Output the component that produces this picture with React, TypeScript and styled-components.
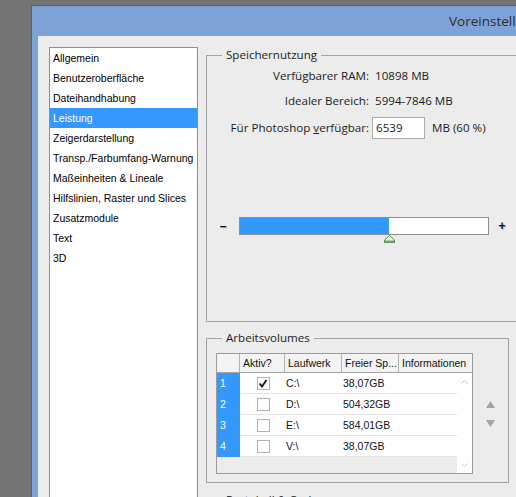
import React from 'react';
import styled, { createGlobalStyle } from 'styled-components';

const GlobalStyle = createGlobalStyle`
  html, body {
    margin: 0;
    padding: 0;
  }
  body {
    width: 516px;
    height: 497px;
    overflow: hidden;
    background: #747474;
  }
`;

const uiFont = `'Open Sans', 'Liberation Sans', Arial, sans-serif`;
const listFont = `'Liberation Sans', Arial, sans-serif`;

const Desktop = styled.div`
  width: 516px;
  height: 497px;
  overflow: hidden;
  box-sizing: border-box;
  padding: 5px 0 0 31px;
  background: #747474;
`;

const Window = styled.div`
  width: 560px;
  height: 600px;
  background: #7da2d6;
  border-top: 1px solid #5e5e5e;
  border-left: 1px solid #5e5e5e;
  padding-left: 6px;
  display: flex;
  flex-direction: column;
`;

const TitleBar = styled.div`
  height: 30px;
  flex-shrink: 0;
  display: flex;
  align-items: center;
  padding-left: 411px;
  font: 13.5px/30px ${uiFont};
  color: #2c2c2c;
  white-space: nowrap;
`;

const Client = styled.div`
  flex: 1;
  background: #ececec;
  display: flex;
  align-items: flex-start;
  gap: 8px;
  padding: 11px 0 0 11px;
`;

const CategoryList = styled.ul`
  list-style: none;
  margin: 0;
  padding: 0;
  width: 149px;
  height: 480px;
  flex-shrink: 0;
  box-sizing: border-box;
  background: #fff;
  border: 1px solid #8f8f8f;
  font: 10.5px ${listFont};
`;

const CategoryItem = styled.li<{ $active?: boolean }>`
  height: 20px;
  line-height: 20px;
  padding-left: 3px;
  white-space: nowrap;
  background: ${({ $active }) => ($active ? '#3399ff' : 'transparent')};
  color: ${({ $active }) => ($active ? '#fff' : '#000')};
`;

const Panel = styled.div`
  display: flex;
  flex-direction: column;
  align-items: flex-start;
  width: 340px;
  flex-shrink: 0;
`;

const Group = styled.fieldset<{ $width: number; $height: number; $gap?: number }>`
  margin: ${({ $gap }) => $gap ?? 0}px 0 0;
  padding: 0;
  min-inline-size: 0;
  box-sizing: border-box;
  width: ${({ $width }) => $width}px;
  height: ${({ $height }) => $height}px;
  border: 1px solid #a2a2a2;
`;

const GroupTitle = styled.legend`
  margin-left: 15px;
  padding: 0 4px;
  font: 11.6px/16px ${uiFont};
  color: #1c1c1c;
`;

const MemoryGrid = styled.div`
  display: grid;
  grid-template-columns: 162px auto;
  grid-template-rows: 25px 25px 30px;
  column-gap: 3px;
  align-items: center;
  font: 11.6px/16px ${uiFont};
  color: #1c1c1c;
`;

const Label = styled.span`
  text-align: right;
  white-space: nowrap;
`;

const Value = styled.span`
  padding-left: 3px;
  white-space: nowrap;
`;

const InputRow = styled.div`
  display: flex;
  align-items: center;
  gap: 7px;
  white-space: nowrap;
`;

const NumberBox = styled.div`
  width: 53px;
  height: 22px;
  box-sizing: border-box;
  border: 1px solid #ababab;
  background: #fff;
  padding-left: 3px;
  line-height: 20px;
`;

const SliderRow = styled.div`
  display: flex;
  align-items: center;
  margin-top: 74px;
`;

const SliderSign = styled.span<{ $width: number }>`
  width: ${({ $width }) => $width}px;
  text-align: center;
  font: bold 12px/18px ${listFont};
  color: #111;
  text-shadow: 1px 1px 1px rgba(0, 0, 0, 0.25);
`;

const Track = styled.div`
  position: relative;
  width: 250px;
  height: 18px;
  box-sizing: border-box;
  border: 1px solid #8e8e8e;
  background: #fff;
`;

const TrackFill = styled.div`
  height: 100%;
  background: #3399ff;
`;

const Thumb = styled.svg`
  position: absolute;
  top: calc(100% + 1px);
  margin-left: -5px;
`;

const VolumesBody = styled.div`
  display: flex;
  align-items: center;
  margin-top: 7px;
  padding-left: 9px;
`;

const Table = styled.div`
  width: 257px;
  height: 121px;
  flex-shrink: 0;
  box-sizing: border-box;
  border: 1px solid #9c9c9c;
  background: #ececec;
  display: flex;
  flex-direction: column;
  font: 10.5px ${listFont};
  color: #111;
`;

const columns = '23px 45px 57px 57px 1fr';

const HeaderRow = styled.div`
  display: grid;
  grid-template-columns: ${columns};
  height: 19px;
  flex-shrink: 0;
  box-sizing: border-box;
  border-bottom: 1px solid #a4a4a4;
  background: #f3f3f3;
`;

const HeaderCell = styled.div<{ $last?: boolean }>`
  padding-left: 3px;
  line-height: 18px;
  white-space: nowrap;
  overflow: hidden;
  border-right: ${({ $last }) => ($last ? 'none' : '1px solid #b4b4b4')};
`;

const TableBody = styled.div`
  flex: 1;
  display: flex;
`;

const Rows = styled.div`
  flex: 1;
  display: flex;
  flex-direction: column;
`;

const Row = styled.div`
  display: grid;
  grid-template-columns: ${columns};
  height: 21px;
`;

const NumberCell = styled.div`
  background: #3399ff;
  color: #fff;
  padding-left: 3px;
  line-height: 21px;
`;

const Cell = styled.div<{ $center?: boolean }>`
  background: #fff;
  border-bottom: 1px solid #e4e4e4;
  padding-left: 1px;
  line-height: 20px;
  white-space: nowrap;
  display: flex;
  align-items: center;
  justify-content: ${({ $center }) => ($center ? 'center' : 'flex-start')};
`;

const CheckBox = styled.span`
  width: 13px;
  height: 13px;
  box-sizing: border-box;
  border: 1px solid #b1b1b1;
  background: #fff;
  display: flex;
  align-items: center;
  justify-content: center;
`;

const ScrollBar = styled.div`
  width: 15px;
  background: #fff;
  display: flex;
  flex-direction: column;
  align-items: center;
  justify-content: space-between;
  padding: 7px 0 6px;
  box-sizing: border-box;
`;

const OrderButtons = styled.div`
  flex: 1;
  display: flex;
  flex-direction: column;
  align-items: center;
  gap: 12px;
`;

const categories = [
  'Allgemein',
  'Benutzeroberfläche',
  'Dateihandhabung',
  'Leistung',
  'Zeigerdarstellung',
  'Transp./Farbumfang-Warnung',
  'Maßeinheiten & Lineale',
  'Hilfslinien, Raster und Slices',
  'Zusatzmodule',
  'Text',
  '3D',
];

const volumes = [
  { id: 1, active: true, drive: 'C:\\', free: '38,07GB' },
  { id: 2, active: false, drive: 'D:\\', free: '504,32GB' },
  { id: 3, active: false, drive: 'E:\\', free: '584,01GB' },
  { id: 4, active: false, drive: 'V:\\', free: '38,07GB' },
];

const ramPercent = 60;

const Chevron = ({ down }: { down?: boolean }) => (
  <svg width="7" height="4" viewBox="0 0 7 4">
    <path
      d={down ? 'M0.5 0.5 L3.5 3.5 L6.5 0.5' : 'M0.5 3.5 L3.5 0.5 L6.5 3.5'}
      fill="none"
      stroke="#c6c6c6"
      strokeWidth="1"
    />
  </svg>
);

const Arrow = ({ down }: { down?: boolean }) => (
  <svg width="9" height="7" viewBox="0 0 9 7">
    <polygon points={down ? '0,0 9,0 4.5,7' : '4.5,0 9,7 0,7'} fill="#a3a3a3" />
  </svg>
);

const App = () => {
  return (
    <Desktop>
      <GlobalStyle />
      <Window>
        <TitleBar>Voreinstellungen</TitleBar>
        <Client>
          <CategoryList>
            {categories.map((c) => (
              <CategoryItem key={c} $active={c === 'Leistung'}>
                {c}
              </CategoryItem>
            ))}
          </CategoryList>
          <Panel>
            <Group $width={330} $height={275}>
              <GroupTitle>Speichernutzung</GroupTitle>
              <MemoryGrid>
                <Label>Verfügbarer RAM:</Label>
                <Value>10898 MB</Value>
                <Label>Idealer Bereich:</Label>
                <Value>5994-7846 MB</Value>
                <Label>
                  Für Photoshop <u>v</u>erfügbar:
                </Label>
                <InputRow>
                  <NumberBox>6539</NumberBox>
                  MB (60 %)
                </InputRow>
              </MemoryGrid>
              <SliderRow>
                <SliderSign $width={32}>–</SliderSign>
                <Track>
                  <TrackFill style={{ width: `${ramPercent}%` }} />
                  <Thumb
                    width="11"
                    height="8"
                    viewBox="0 0 11 8"
                    style={{ left: `${ramPercent}%` }}
                  >
                    <path d="M5.5 0.5 L10.5 5 L10.5 7.5 L0.5 7.5 L0.5 5 Z" fill="#eef6ee" stroke="#4f8a55" />
                    <rect x="1" y="5.5" width="9" height="2" fill="#6fa374" />
                  </Thumb>
                </Track>
                <SliderSign $width={26}>+</SliderSign>
              </SliderRow>
            </Group>

            <Group $width={303} $height={153} $gap={8}>
              <GroupTitle>Arbeitsvolumes</GroupTitle>
              <VolumesBody>
                <Table>
                  <HeaderRow>
                    <HeaderCell />
                    <HeaderCell>Aktiv?</HeaderCell>
                    <HeaderCell>Laufwerk</HeaderCell>
                    <HeaderCell>Freier Sp...</HeaderCell>
                    <HeaderCell $last>Informationen</HeaderCell>
                  </HeaderRow>
                  <TableBody>
                    <Rows>
                      {volumes.map((v) => (
                        <Row key={v.id}>
                          <NumberCell>{v.id}</NumberCell>
                          <Cell $center>
                            <CheckBox>
                              {v.active && (
                                <svg width="10" height="9" viewBox="0 0 10 9">
                                  <path
                                    d="M1.5 4.5 L4 7.5 L8.5 1"
                                    fill="none"
                                    stroke="#111"
                                    strokeWidth="1.8"
                                  />
                                </svg>
                              )}
                            </CheckBox>
                          </Cell>
                          <Cell>{v.drive}</Cell>
                          <Cell>{v.free}</Cell>
                          <Cell />
                        </Row>
                      ))}
                    </Rows>
                    <ScrollBar>
                      <Chevron />
                      <Chevron down />
                    </ScrollBar>
                  </TableBody>
                </Table>
                <OrderButtons>
                  <Arrow />
                  <Arrow down />
                </OrderButtons>
              </VolumesBody>
            </Group>

            <Group $width={303} $height={120} $gap={9}>
              <GroupTitle>Protokoll &amp; Cache</GroupTitle>
            </Group>
          </Panel>
        </Client>
      </Window>
    </Desktop>
  );
};

export default App;
